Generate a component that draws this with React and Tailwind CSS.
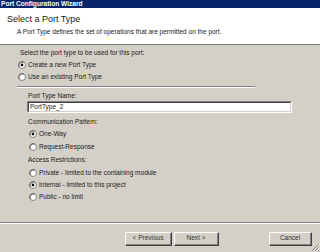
import React from "react";

function Radio({ checked }) {
  return (
    <svg width="8" height="8" viewBox="0 0 8 8" className="shrink-0">
      <circle cx="4" cy="4" r="3.5" fill="#ffffff" stroke="#808080" strokeWidth="1" />
      <path d="M1.2 5.8 A3.5 3.5 0 0 1 5.8 1.2" fill="none" stroke="#404040" strokeWidth="0.8" />
      {checked && <circle cx="4" cy="4" r="1.4" fill="#111111" />}
    </svg>
  );
}

function Option({ checked, label, className = "" }) {
  return (
    <div className={`flex items-center h-[12px] ${className}`}>
      <Radio checked={checked} />
      <span className="ml-[2px] leading-[12px]">{label}</span>
    </div>
  );
}

function Etched({ className = "" }) {
  return (
    <div className={className}>
      <div className="h-px bg-[#808080]" />
      <div className="h-px bg-white" />
    </div>
  );
}

function Button({ children, className = "" }) {
  return (
    <div
      className={`h-[14px] border border-t-white border-l-white border-b-[#404040] border-r-[#404040] ${className}`}
    >
      <div className="h-full flex items-center justify-center border-b border-r border-b-[#808080] border-r-[#808080] bg-[#d4d0c8]">
        <span className="leading-none text-[#333]">{children}</span>
      </div>
    </div>
  );
}

export default function App() {
  return (
    <div
      className="relative w-[320px] h-[252px] flex flex-col bg-[#d4d0c8] text-[6.5px] text-[#1a1a1a] overflow-hidden"
      style={{ fontFamily: '"Liberation Sans", Arial, sans-serif' }}
    >
      {/* title bar */}
      <div className="h-[8px] bg-[#0a246a] flex items-center pl-[1px]">
        <span className="text-white font-bold text-[6.6px] leading-none">
          Port Configuration Wizard
        </span>
      </div>

      {/* header */}
      <div className="h-[37px] bg-white border-b border-b-[#808080]">
        <div className="pt-[6px] pl-[7px] h-[16px] leading-[10px] text-[9px]">
          Select a Port Type
        </div>
        <div className="mt-[3px] pl-[17px] leading-[10px] text-[6.5px]">
          A Port Type defines the set of operations that are permitted on the port.
        </div>
      </div>

      {/* body */}
      <div className="flex flex-col pl-[17px]">
        <div className="mt-[2px] h-[12px] leading-[12px] pl-[3px]">
          Select the port type to be used for this port:
        </div>
        <Option checked label="Create a new Port Type" className="pl-[1px]" />
        <Option label="Use an existing Port Type" className="pl-[1px]" />
        <Etched className="mt-[3px] w-[238px]" />

        <div className="pl-[10px] flex flex-col">
          <div className="mt-[3px] h-[10px] leading-[10px] pl-[1px]">Port Type Name:</div>
          <div className="h-[12px] w-[265px] border-t border-l border-t-[#808080] border-l-[#808080] border-b border-r border-b-white border-r-white">
            <div className="h-full bg-white border-t border-l border-t-[#404040] border-l-[#404040] border-b border-r border-b-[#d4d0c8] border-r-[#d4d0c8] flex items-center pl-[1px]">
              <span className="leading-none">PortType_2</span>
            </div>
          </div>

          <div className="mt-[3px] h-[12px] leading-[12px] pl-[1px]">Communication Pattern:</div>
          <div className="pl-[2px] flex flex-col">
            <Option checked label="One-Way" />
            <Option label="Request-Response" className="mt-[1px]" />
          </div>

          <div className="mt-[1px] h-[12px] leading-[12px] pl-[1px]">Access Restrictions:</div>
          <div className="pl-[2px] flex flex-col">
            <Option label="Private - limited to the containing module" className="mt-[1px]" />
            <Option checked label="Internal - limited to this project" />
            <Option label="Public - no limit" />
          </div>
        </div>
      </div>

      {/* footer */}
      <div className="mt-auto">
        <Etched />
        <div className="flex pt-[8px] pb-[6px] pl-[125px]">
          <Button className="w-[47px]">&lt; Previous</Button>
          <Button className="w-[45px] ml-[2px]">Next &gt;</Button>
          <Button className="w-[43px] ml-[50px]">Cancel</Button>
        </div>
      </div>

      {/* resize grip */}
      <svg
        width="9"
        height="9"
        viewBox="0 0 9 9"
        className="absolute right-0 bottom-0"
      >
        <path d="M8 1 L1 8 M8 4 L4 8 M8 7 L7 8" stroke="#808080" strokeWidth="1" />
        <path d="M9 1 L1 9 M9 4 L4 9" stroke="#ffffff" strokeWidth="0.6" />
      </svg>
    </div>
  );
}
